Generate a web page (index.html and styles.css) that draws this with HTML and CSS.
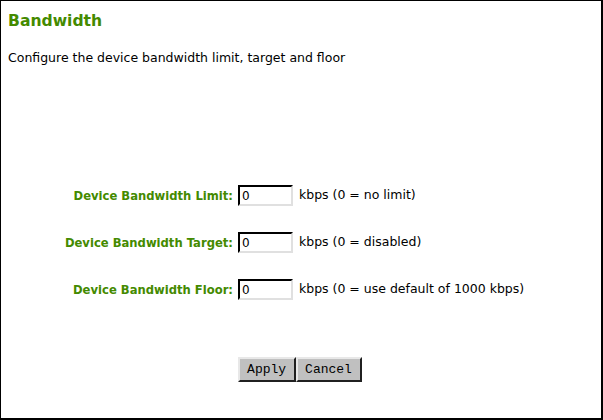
FILE: index.html
```html
<!DOCTYPE html>
<html lang="en">
<head>
    <meta charset="UTF-8">
    <title>Bandwidth</title>
    <link rel="stylesheet" href="styles.css">
</head>
<body>
    <div class="page">
        <h1>Bandwidth</h1>
        <p class="intro">Configure the device bandwidth limit, target and floor</p>
        <form class="fields">
            <label for="limit">Device Bandwidth Limit:</label>
            <div class="value"><input type="text" id="limit" value="0"> kbps (0 = no limit)</div>
            <label for="target">Device Bandwidth Target:</label>
            <div class="value"><input type="text" id="target" value="0"> kbps (0 = disabled)</div>
            <label for="floor">Device Bandwidth Floor:</label>
            <div class="value"><input type="text" id="floor" value="0"> kbps (0 = use default of 1000 kbps)</div>
        </form>
        <div class="buttons">
            <button type="button">Apply</button><button type="button">Cancel</button>
        </div>
    </div>
</body>
</html>
```
FILE: styles.css
```css
body {
    margin: 0;
    padding: 0;
    background: white;
    font-family: "DejaVu Sans", Verdana, sans-serif;
    font-size: 12.5px;
    color: black;
}
.page {
    box-sizing: border-box;
    width: 603px;
    height: 420px;
    border-style: solid;
    border-color: black;
    border-width: 1px 2px 2px 1px;
    padding: 0 7px;
}
h1 {
    margin: 11px 0 0 0;
    font-size: 15.6px;
    font-weight: bold;
    color: #448a00;
}
.intro {
    margin: 20px 0 0 0;
}
.fields {
    display: grid;
    grid-template-columns: 225px auto;
    column-gap: 5px;
    row-gap: 26px;
    align-items: center;
    margin-top: 120px;
}
.fields label {
    text-align: right;
    font-size: 11.6px;
    font-weight: bold;
    color: #448a00;
}
.value input {
    box-sizing: border-box;
    width: 55px;
    height: 21px;
    margin: 0 2px 0 0;
    padding: 1px 2px;
    font-family: "DejaVu Sans", Verdana, sans-serif;
    font-size: 12px;
    border: 2px inset #e0e0e0;
    border-color: #404040 #e0e0e0 #e0e0e0 #404040;
    vertical-align: middle;
}
.buttons {
    display: flex;
    justify-content: center;
    margin-top: 57px;
    padding-right: 2px;
}
button {
    background: #c0c0c0;
    font-family: "Liberation Mono", "Courier New", monospace;
    font-size: 13px;
    color: black;
    padding: 3px 8px 3px 7px;
    border: 2px solid;
    border-color: #e8e8e8 #202020 #202020 #e8e8e8;
}
```
